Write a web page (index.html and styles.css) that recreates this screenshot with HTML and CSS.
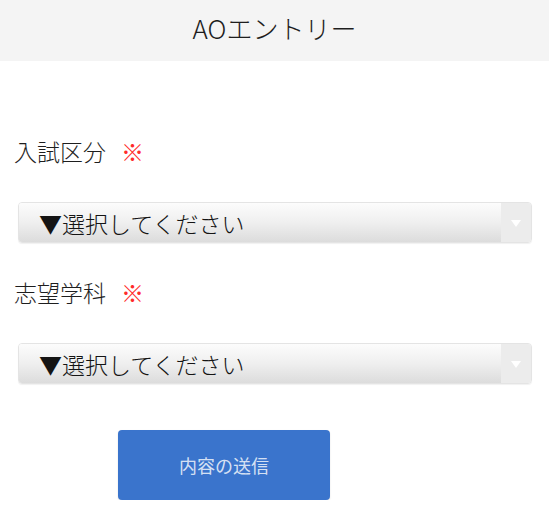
FILE: index.html
```html
<!DOCTYPE html>
<html lang="ja">
<head>
<meta charset="utf-8">
<title>AOエントリー</title>
<link rel="stylesheet" href="styles.css">
</head>
<body>
<header class="page-header">
  <h1 class="page-title">AOエントリー</h1>
</header>
<main class="content">
  <form class="entry-form">
    <div class="field">
      <label class="field-label" for="exam">入試区分<span class="required">※</span></label>
      <div class="select-box">
        <select id="exam" class="select">
          <option>▼選択してください</option>
        </select>
        <span class="select-arrow"></span>
      </div>
    </div>
    <div class="field">
      <label class="field-label" for="dept">志望学科<span class="required">※</span></label>
      <div class="select-box">
        <select id="dept" class="select">
          <option>▼選択してください</option>
        </select>
        <span class="select-arrow"></span>
      </div>
    </div>
    <div class="actions">
      <button type="button" class="submit-btn">内容の送信</button>
    </div>
  </form>
</main>
</body>
</html>
```

FILE: styles.css
```css
html, body {
  margin: 0;
  padding: 0;
  background: #ffffff;
}

body {
  font-family: "Noto Sans CJK JP", "Noto Sans", sans-serif;
  color: #222222;
}

.page-header {
  height: 61px;
  background: #f4f4f4;
  display: flex;
  align-items: center;
  justify-content: center;
  box-sizing: border-box;
  padding-bottom: 5px;
}

.page-title {
  margin: 0;
  font-size: 26px;
  font-weight: 300;
  line-height: 30px;
  color: #1e1e1e;
}

.content {
  padding: 75px 17px 0 18px;
}

.entry-form {
  display: flex;
  flex-direction: column;
}

.field {
  display: flex;
  flex-direction: column;
  gap: 36px;
  margin-bottom: 34px;
}

.field-label {
  display: block;
  margin-left: -4px;
  font-size: 23px;
  font-weight: 300;
  line-height: 30px;
  color: #1e1e1e;
}

.required {
  color: #ff2a2a;
  margin-left: 15px;
}

.select-box {
  display: flex;
  height: 41px;
  box-sizing: border-box;
  border: 1px solid #e4e4e4;
  border-radius: 4px;
  overflow: hidden;
  box-shadow: 0 1px 1px rgba(0, 0, 0, 0.06);
}

.select {
  flex: 1;
  -webkit-appearance: none;
  appearance: none;
  border: none;
  outline: none;
  margin: 0;
  padding: 0 0 0 20px;
  height: 100%;
  font-family: "Noto Sans CJK JP", sans-serif;
  font-size: 23px;
  font-weight: 300;
  color: #141414;
  background: linear-gradient(to bottom, #fcfcfc 0%, #efefef 50%, #dcdcdc 100%);
}

.select-arrow {
  width: 30px;
  flex: none;
  background: #ececec;
  display: flex;
  align-items: center;
  justify-content: center;
}

.select-arrow::before {
  content: "";
  width: 0;
  height: 0;
  border-left: 5px solid transparent;
  border-right: 5px solid transparent;
  border-top: 7px solid #ffffff;
  margin-top: 2px;
}

.actions {
  margin-top: 12px;
  padding-left: 100px;
}

.submit-btn {
  width: 212px;
  height: 70px;
  border: none;
  border-radius: 4px;
  background: #3a74cc;
  color: rgba(255, 255, 255, 0.8);
  font-family: "Noto Sans CJK JP", sans-serif;
  font-size: 18px;
  box-shadow: 0 1px 2px rgba(0, 0, 0, 0.12);
}
```
